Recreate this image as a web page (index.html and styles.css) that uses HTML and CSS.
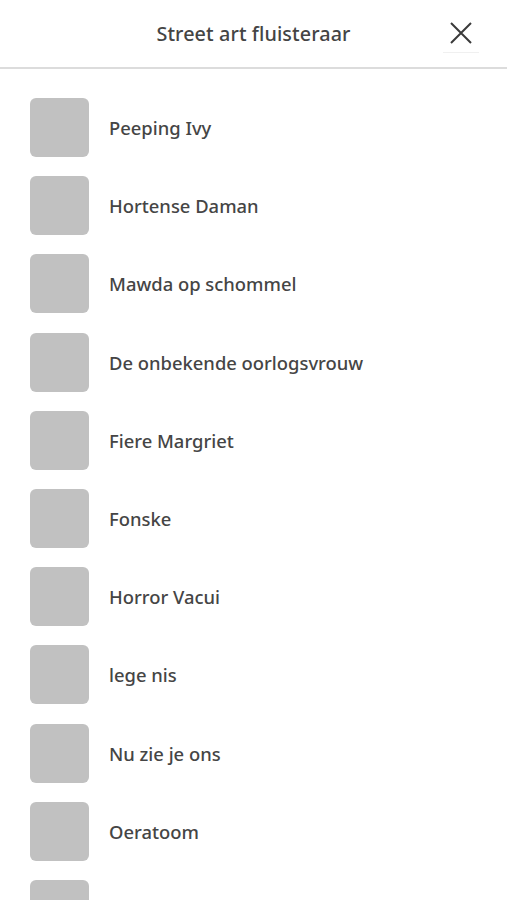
FILE: index.html
```html
<!DOCTYPE html>
<html lang="nl">
<head>
<meta charset="utf-8">
<link rel="stylesheet" href="styles.css">
</head>
<body>
<header class="header">
  <h1 class="title">Street art fluisteraar</h1>
  <button class="close" aria-label="Sluiten">
    <svg width="24" height="24" viewBox="0 0 24 24"><path d="M2 2 L22 22 M22 2 L2 22" stroke="#3a3a3a" stroke-width="2" fill="none"/></svg>
  </button>
</header>
<ul class="list">
  <li class="item"><span class="thumb"></span><span class="name">Peeping Ivy</span></li>
  <li class="item"><span class="thumb"></span><span class="name">Hortense Daman</span></li>
  <li class="item"><span class="thumb"></span><span class="name">Mawda op schommel</span></li>
  <li class="item"><span class="thumb"></span><span class="name">De onbekende oorlogsvrouw</span></li>
  <li class="item"><span class="thumb"></span><span class="name">Fiere Margriet</span></li>
  <li class="item"><span class="thumb"></span><span class="name">Fonske</span></li>
  <li class="item"><span class="thumb"></span><span class="name">Horror Vacui</span></li>
  <li class="item"><span class="thumb"></span><span class="name">lege nis</span></li>
  <li class="item"><span class="thumb"></span><span class="name">Nu zie je ons</span></li>
  <li class="item"><span class="thumb"></span><span class="name">Oeratoom</span></li>
  <li class="item"><span class="thumb"></span><span class="name"></span></li>
</ul>
</body>
</html>
```
FILE: styles.css
```css
html, body {
  margin: 0;
  padding: 0;
  background: #fff;
  font-family: "Noto Sans", "Open Sans", sans-serif;
  color: #444;
  overflow: hidden;
  height: 900px;
}
.header {
  position: relative;
  height: 67px;
  border-bottom: 2px solid #dcdcdc;
  display: flex;
  align-items: center;
  justify-content: center;
}
.title {
  margin: 0;
  font-size: 19.8px;
  font-weight: 500;
  color: #444;
  letter-spacing: 0.1px;
}
.close {
  position: absolute;
  right: 28px;
  top: 14px;
  width: 36px;
  height: 39px;
  padding: 0;
  border: 0;
  background: transparent;
  border-bottom: 1px solid #f0f0f0;
  display: flex;
  align-items: center;
  justify-content: center;
}
.list {
  list-style: none;
  margin: 0;
  padding: 29px 0 0 30px;
  display: flex;
  flex-direction: column;
  gap: 19.2px;
}
.item {
  display: flex;
  align-items: center;
  gap: 20px;
  height: 59px;
}
.thumb {
  width: 59px;
  height: 59px;
  border-radius: 6px;
  background: #c1c1c1;
  flex: none;
}
.name {
  font-size: 18.4px;
  font-weight: 500;
  color: #454545;
}
```
